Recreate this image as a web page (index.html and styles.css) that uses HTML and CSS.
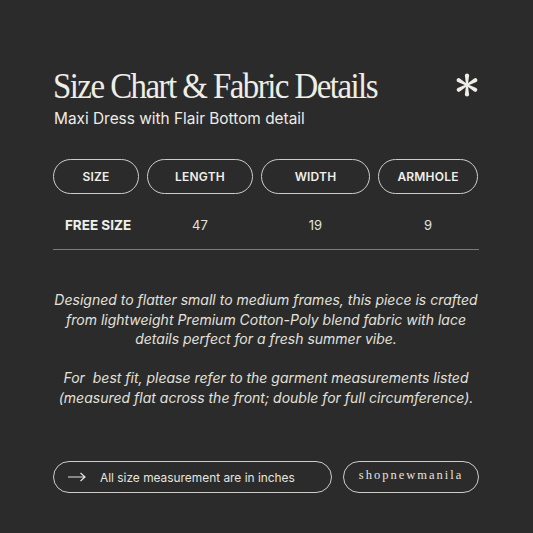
FILE: index.html
```html
<!DOCTYPE html>
<html>
<head>
<meta charset="utf-8">
<link rel="stylesheet" href="styles.css">
</head>
<body>
<div class="card">
  <header class="head">
    <div class="titles">
      <h1 class="title">Size Chart &amp; Fabric Details</h1>
      <p class="subtitle">Maxi Dress with Flair Bottom detail</p>
    </div>
    <svg class="star" width="26" height="26" viewBox="-13 -13 26 26">
      <g fill="#efede6">
        <path id="arm" d="M-0.9 0 L-2.1 -9.5 A2.1 2.1 0 0 1 2.1 -9.5 L0.9 0 Z"/>
        <use href="#arm" transform="rotate(60)"/>
        <use href="#arm" transform="rotate(120)"/>
        <use href="#arm" transform="rotate(180)"/>
        <use href="#arm" transform="rotate(240)"/>
        <use href="#arm" transform="rotate(300)"/>
        <circle r="1.6"/>
      </g>
    </svg>
  </header>
  <div class="table">
    <div class="pill">SIZE</div>
    <div class="pill">LENGTH</div>
    <div class="pill">WIDTH</div>
    <div class="pill">ARMHOLE</div>
    <div class="cell strong">FREE SIZE</div>
    <div class="cell">47</div>
    <div class="cell">19</div>
    <div class="cell">9</div>
  </div>
  <div class="desc">
    <p>Designed to flatter small to medium frames, this piece is crafted from lightweight Premium Cotton-Poly blend fabric with lace details perfect for a fresh summer vibe.</p>
    <p>For&nbsp; best fit, please refer to the garment measurements listed (measured flat across the front; double for full circumference).</p>
  </div>
  <footer class="foot">
    <div class="note">
      <svg class="arrow" width="18" height="10" viewBox="0 0 18 10">
        <path d="M0 5 H17 M12.5 1 L17 5 L12.5 9" fill="none" stroke="#e6e4de" stroke-width="1.2"/>
      </svg>
      <span>All size measurement are in inches</span>
    </div>
    <div class="brand">shopnewmanila</div>
  </footer>
</div>
</body>
</html>
```
FILE: styles.css
```css
html, body {
  margin: 0;
  padding: 0;
  background: #2b2b2b;
}
.card {
  width: 533px;
  height: 533px;
  box-sizing: border-box;
  padding: 66px 54px 0 53px;
  font-family: Inter, "Noto Sans", sans-serif;
  color: #ecebe6;
}
.head {
  display: flex;
  justify-content: space-between;
  align-items: flex-start;
}
.title {
  margin: 0;
  display: inline-block;
  white-space: nowrap;
  font-family: "Liberation Serif", serif;
  font-weight: normal;
  font-size: 36px;
  line-height: 40px;
  letter-spacing: -1.7px;
  color: #efede6;
  transform: scaleX(0.915);
  transform-origin: 0 0;
}
.subtitle {
  margin: 3px 0 0 1px;
  font-size: 15.4px;
  line-height: 20px;
  color: #ecebe6;
}
.star {
  margin-top: 6px;
  margin-right: -1px;
}
.table {
  margin-top: 30px;
  display: grid;
  grid-template-columns: 86px 106px 109px 100px;
  column-gap: 8px;
  border-bottom: 1.5px solid #7a7a7a;
}
.pill {
  height: 35px;
  box-sizing: border-box;
  border: 1.5px solid #cfcdc8;
  border-radius: 18px;
  display: flex;
  align-items: center;
  justify-content: center;
  font-size: 12px;
  font-weight: 600;
  letter-spacing: 0.2px;
  color: #f0efea;
}
.cell {
  height: 55px;
  box-sizing: border-box;
  padding-top: 6px;
  display: flex;
  align-items: center;
  justify-content: center;
  font-size: 13px;
  color: #e4e3de;
}
.cell.strong {
  font-weight: 700;
  font-size: 13.5px;
  color: #f0efea;
  padding-left: 4px;
}
.desc {
  margin-top: 40px;
  text-align: center;
  font-style: italic;
  font-size: 14px;
  line-height: 19.5px;
  color: #e2e1dc;
}
.desc p {
  margin: 0 0 19.5px;
}
.foot {
  margin-top: 54px;
  display: flex;
  gap: 11px;
}
.note {
  width: 279px;
  height: 32px;
  box-sizing: border-box;
  border: 1.5px solid #cfcdc8;
  border-radius: 16px;
  display: flex;
  align-items: center;
  padding-left: 14px;
  gap: 14px;
  font-size: 11.9px;
  color: #e6e4de;
}
.brand {
  width: 136px;
  height: 32px;
  box-sizing: border-box;
  border: 1.5px solid #cfcdc8;
  border-radius: 16px;
  display: flex;
  align-items: center;
  justify-content: center;
  font-family: "Liberation Serif", serif;
  font-size: 12.5px;
  letter-spacing: 2px;
  color: #e6e4de;
  padding-bottom: 3px;
}
```
